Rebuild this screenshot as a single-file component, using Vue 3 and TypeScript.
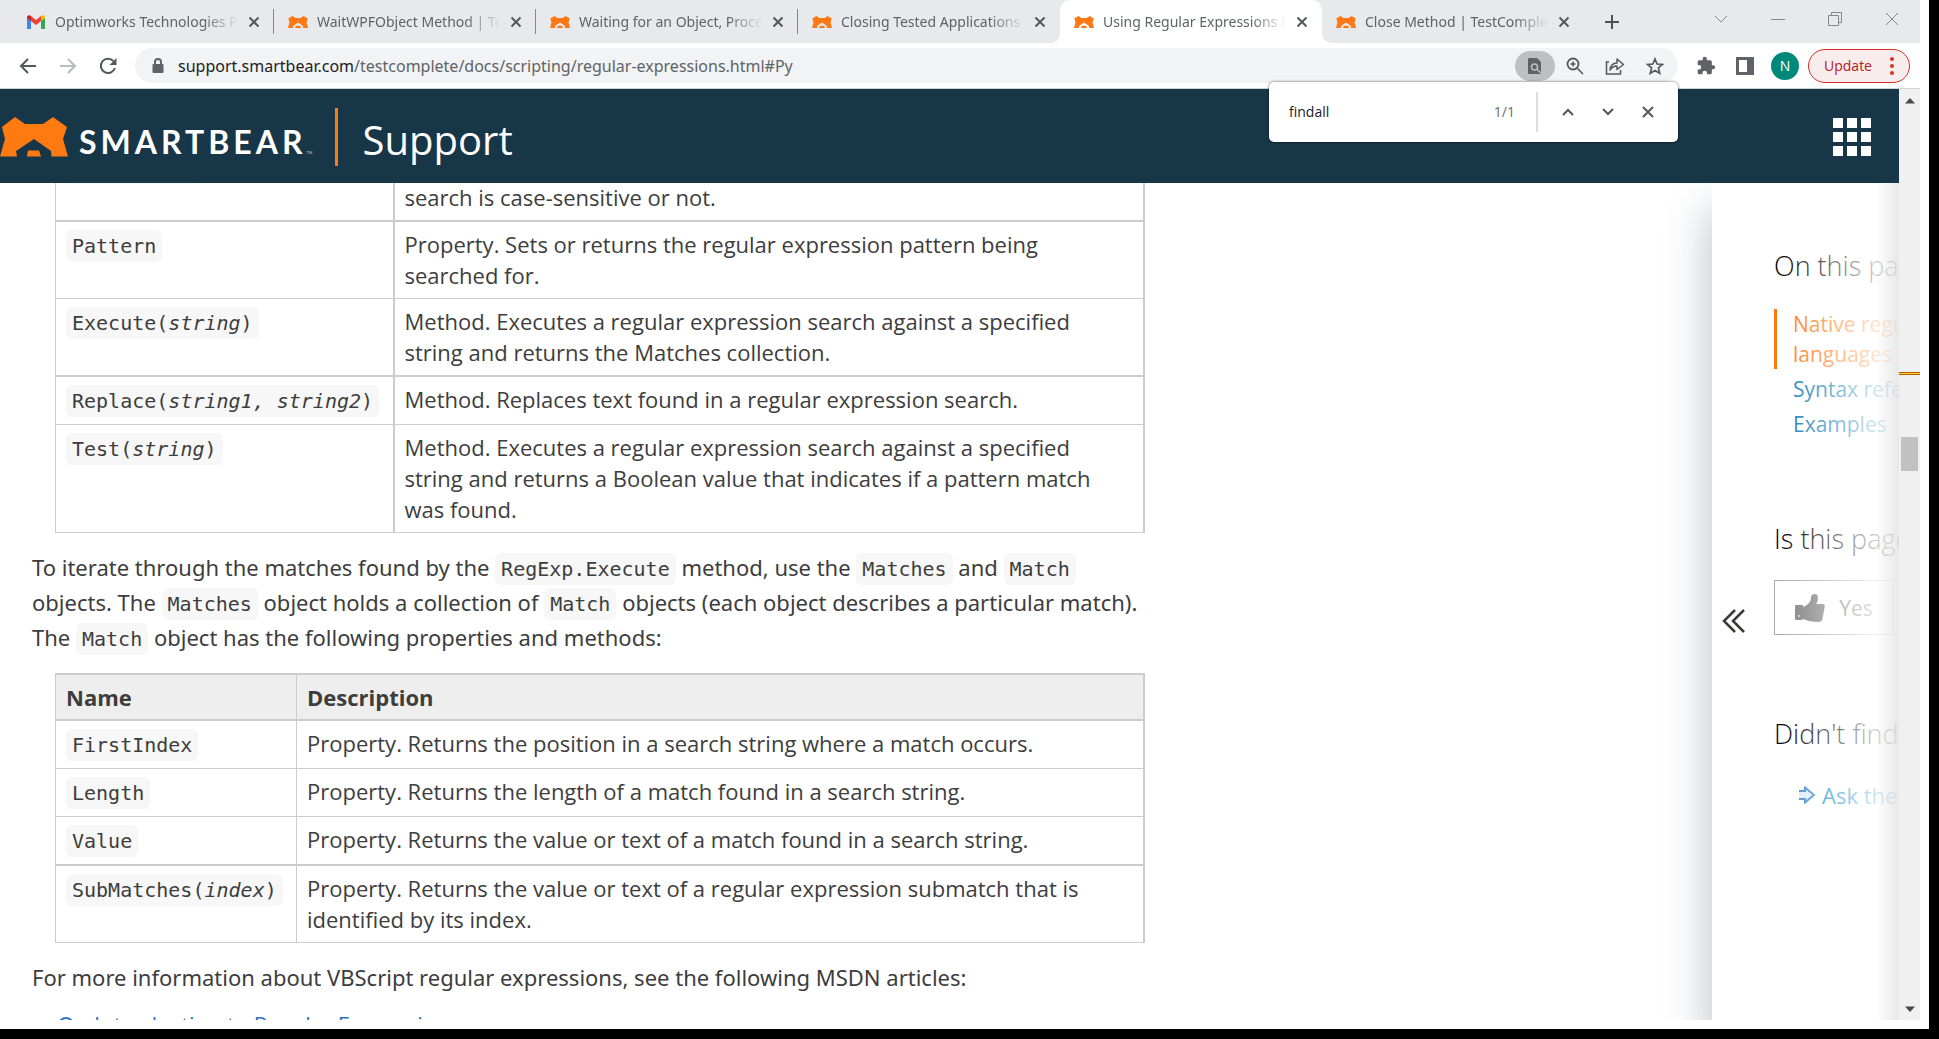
<script setup lang="ts">
import { ref } from 'vue'

interface Tab {
  title: string
  icon: 'gmail' | 'bear'
  active?: boolean
  divider?: boolean
}

interface Member {
  name: string
  args?: string
  text: string
  strong?: boolean
}

const tabs: Tab[] = [
  { title: 'Optimworks Technologies Pvt', icon: 'gmail', divider: true },
  { title: 'WaitWPFObject Method | TestComplete', icon: 'bear', divider: true },
  { title: 'Waiting for an Object, Process', icon: 'bear', divider: true },
  { title: 'Closing Tested Applications | Test', icon: 'bear' },
  { title: 'Using Regular Expressions in Scripts', icon: 'bear', active: true },
  { title: 'Close Method | TestComplete', icon: 'bear' },
]

const regExpMembers: Member[] = [
  { name: 'IgnoreCase', text: 'Property. A Boolean value that indicates whether the current pattern search is case-sensitive or not.', strong: true },
  { name: 'Pattern', text: 'Property. Sets or returns the regular expression pattern being searched for.' },
  { name: 'Execute', args: 'string', text: 'Method. Executes a regular expression search against a specified string and returns the Matches collection.', strong: true },
  { name: 'Replace', args: 'string1, string2', text: 'Method. Replaces text found in a regular expression search.' },
  { name: 'Test', args: 'string', text: 'Method. Executes a regular expression search against a specified string and returns a Boolean value that indicates if a pattern match was found.' },
]

const matchMembers: Member[] = [
  { name: 'FirstIndex', text: 'Property. Returns the position in a search string where a match occurs.' },
  { name: 'Length', text: 'Property. Returns the length of a match found in a search string.' },
  { name: 'Value', text: 'Property. Returns the value or text of a match found in a search string.', strong: true },
  { name: 'SubMatches', args: 'index', text: 'Property. Returns the value or text of a regular expression submatch that is identified by its index.' },
]

const query = ref('findall')
</script>

<template>
  <div class="frame">
    <div class="browser">
      <div class="tabstrip">
        <div v-for="tab in tabs" :key="tab.title" class="tab" :class="{ active: tab.active, divider: tab.divider }">
          <svg v-if="tab.icon === 'gmail'" class="favicon" viewBox="0 0 20 20">
            <path d="M1 17V5l4 3v9z" fill="#4285f4" />
            <path d="M15 17V8l4-3v12z" fill="#34a853" />
            <path d="M5 4l5 4 5-4v5l-5 4-5-4z" fill="#ea4335" />
            <path d="M1 5.500C1 3 3.500 2.600 5 4v5L1 6z" fill="#c5221f" />
            <path d="M19 5.500C19 3 16.500 2.600 15 4v5l4-3z" fill="#fbbc04" />
          </svg>
          <svg v-else class="favicon" viewBox="0 -8 68 56">
            <path d="M15 0 25 6H43L53 0 67 8 63 22 68 40H52L50 33 34 22 18 33 16 40H0L5 22 1 8zM27 33H41L44 40H24z" fill="#ff7814" />
          </svg>
          <span class="tab-title">{{ tab.title }}</span>
          <button class="tab-close" aria-label="Close tab">
            <svg viewBox="0 0 12 12"><path d="M1.500 1.500l9 9m0-9l-9 9" stroke="#55585c" stroke-width="2" /></svg>
          </button>
        </div>
        <button class="new-tab" aria-label="New tab">
          <svg viewBox="0 0 16 16"><path d="M8 1v14M1 8h14" stroke="#4d5055" stroke-width="2" /></svg>
        </button>
        <div class="window-buttons">
          <button aria-label="Search tabs"><svg viewBox="0 0 14 14"><path d="M1 4l6 6 6-6" /></svg></button>
          <button aria-label="Minimize"><svg viewBox="0 0 14 14"><path d="M0 7.500h14" /></svg></button>
          <button aria-label="Restore"><svg viewBox="0 0 14 14"><path d="M.5 3.500h10v10H.5zM3.500 3.500v-3h10v10h-3" /></svg></button>
          <button aria-label="Close window"><svg viewBox="0 0 14 14"><path d="M1 1l12 12M13 1L1 13" /></svg></button>
        </div>
      </div>

      <div class="toolbar">
        <div class="nav-buttons">
          <button aria-label="Back"><svg viewBox="0 0 18 18"><path d="M17 9H2m7-7L2 9l7 7" stroke="#55585c" stroke-width="2" fill="none" /></svg></button>
          <button aria-label="Forward"><svg viewBox="0 0 18 18"><path d="M1 9h15M9 2l7 7-7 7" stroke="#b9bbbe" stroke-width="2" fill="none" /></svg></button>
          <button aria-label="Reload"><svg viewBox="0 0 18 18"><path d="M14.500 4.200A7.200 7.200 0 1 0 15.900 11" stroke="#55585c" stroke-width="2" fill="none" /><path d="M17.500 1v7h-7z" fill="#55585c" /></svg></button>
        </div>
        <div class="omnibox">
          <svg class="lock" viewBox="0 0 12 16"><path d="M3 7V4a3 3 0 0 1 6 0v3" stroke="#5f6368" stroke-width="2" fill="none" /><rect x="0.500" y="6" width="11" height="9" rx="1" fill="#5f6368" /></svg>
          <div class="url"><b>support.smartbear.com</b>/testcomplete/docs/scripting/regular-expressions.html#Py</div>
          <button class="find-chip" aria-label="Find in page">
            <svg viewBox="0 0 16 18"><path d="M2 1h8l4 4v11a1 1 0 0 1-1 1H2a1 1 0 0 1-1-1V2a1 1 0 0 1 1-1z" fill="#5f6368" /><circle cx="7.500" cy="10" r="3" stroke="#c0c1c3" stroke-width="1.500" fill="none" /><path d="M9.500 12l4.500 4" stroke="#c0c1c3" stroke-width="1.500" /></svg>
          </button>
          <button aria-label="Zoom"><svg viewBox="0 0 18 18"><circle cx="7" cy="7" r="5.500" stroke="#55585c" stroke-width="1.800" fill="none" /><path d="M11 11l6 6M4.500 7h5M7 4.500v5" stroke="#55585c" stroke-width="1.600" /></svg></button>
          <button aria-label="Share"><svg class="share" viewBox="0 0 20 18"><path d="M4 5H1.500v12h14v-4" stroke="#55585c" stroke-width="1.500" fill="none" /><path d="M5 13c.5-4.500 3-7 7-7V2l6.500 5.500L12 12.500V9C9 9 7 10 5 13z" stroke="#55585c" stroke-width="1.500" fill="none" stroke-linejoin="round" /></svg></button>
          <button aria-label="Bookmark"><svg viewBox="0 0 18 18"><path d="M9 2l2.100 5 5.400.4-4.100 3.500 1.300 5.300L9 13.400l-4.700 2.800 1.300-5.300L1.500 7.400 6.900 7z" stroke="#55585c" stroke-width="1.700" fill="none" /></svg></button>
        </div>
        <button class="ext" aria-label="Extensions"><svg viewBox="0 0 24 24"><path d="M20.500 11H19V7a2 2 0 0 0-2-2h-4V3.500a2.500 2.500 0 0 0-5 0V5H4a2 2 0 0 0-2 2v3.800h1.500a2.700 2.700 0 0 1 0 5.400H2V20a2 2 0 0 0 2 2h3.800v-1.500a2.700 2.700 0 0 1 5.400 0V22H17a2 2 0 0 0 2-2v-4h1.500a2.500 2.500 0 0 0 0-5z" fill="#5f6368" /></svg></button>
        <button class="side" aria-label="Side panel"><svg viewBox="0 0 18 18"><rect x="1.500" y="1.500" width="15" height="15" fill="none" stroke="#5f6368" stroke-width="3" /><path d="M11 1h6v16h-6z" fill="#5f6368" /></svg></button>
        <button class="avatar">N</button>
        <button class="update">
          <span>Update</span>
          <svg viewBox="0 0 4 18"><circle cx="2" cy="2" r="2" /><circle cx="2" cy="9" r="2" /><circle cx="2" cy="16" r="2" /></svg>
        </button>
      </div>

      <div class="viewport">
        <div class="page">
          <header class="site-header">
            <svg class="bear" viewBox="0 0 68 40">
              <path d="M15 0 25 7H43L53 0 67 10 63 22 68 39.500H51.500L51 34 34 22 16 34 17 39.500H0L5 22 2 10z" fill="#ff7a11" />
              <path d="M28 33.500H39L41 39.500H27z" fill="#ff7a11" />
            </svg>
            <span class="wordmark">SMARTBEAR</span><span class="tm">™</span>
            <span class="rule"></span>
            <a class="support" href="#">Support</a>
            <button class="apps" aria-label="Menu"><i v-for="n in 9" :key="n"></i></button>
          </header>

          <div class="body">
            <main class="article">
              <table class="members first">
                <colgroup><col class="wide" /><col /></colgroup>
                <tbody>
                  <tr v-for="m in regExpMembers" :key="m.name" :class="{ strong: m.strong }">
                    <td><code>{{ m.name }}<template v-if="m.args">(<em>{{ m.args }}</em>)</template></code></td>
                    <td>{{ m.text }}</td>
                  </tr>
                </tbody>
              </table>

              <p>
                To iterate through the matches found by the <code>RegExp.Execute</code> method, use the <code>Matches</code> and <code>Match</code> objects. The <code>Matches</code> object holds a collection of <code>Match</code> objects (each object describes a particular match). The <code>Match</code> object has the following properties and methods:
              </p>

              <table class="members second">
                <colgroup><col class="narrow" /><col /></colgroup>
                <thead>
                  <tr><th>Name</th><th>Description</th></tr>
                </thead>
                <tbody>
                  <tr v-for="m in matchMembers" :key="m.name" :class="{ strong: m.strong }">
                    <td><code>{{ m.name }}<template v-if="m.args">(<em>{{ m.args }}</em>)</template></code></td>
                    <td>{{ m.text }}</td>
                  </tr>
                </tbody>
              </table>

              <p>For more information about VBScript regular expressions, see the following MSDN articles:</p>
              <a class="article-link" href="#">
                <svg viewBox="0 0 16 16"><circle cx="8" cy="8" r="7" fill="none" stroke="#2f74c0" stroke-width="2" /></svg>
                <span>Introduction to Regular Expressions</span>
              </a>
            </main>

            <aside class="panel">
              <button class="collapse" aria-label="Expand panel">
                <svg viewBox="0 0 24 24"><path d="M13 1L2 12l11 11M22 1L11 12l11 11" stroke="#3d3935" stroke-width="2.500" fill="none" /></svg>
              </button>
              <div class="panel-content">
                <h3>On this page</h3>
                <nav>
                  <a class="current" href="#">Native regular<br />languages</a>
                  <a href="#">Syntax reference</a>
                  <a href="#">Examples</a>
                </nav>
                <h3 class="helpful">Is this page helpful?</h3>
                <button class="yes">
                  <svg viewBox="0 0 30 28"><path d="M1 11h7v14l-1 1H1a1 1 0 0 1-1-1V12a1 1 0 0 1 1-1z" fill="#7d7d7d" /><path d="M8 13c5-2 8-5 8-10 0-2 2-3 4-3s3 2 3 4c0 3-1 5-2 6h7c2 0 2 2 1.500 4l-2 11c-.5 2-2 3-4 3-5 0-11-1-15.500-3z" fill="#7d7d7d" /><circle cx="4" cy="22" r="1" fill="#ddd" /></svg>
                  <span>Yes</span>
                </button>
                <h3 class="missing">Didn't find what you need?</h3>
                <a class="ask" href="#">
                  <svg viewBox="0 0 18 18"><path d="M1 5h6V1.500L16 9l-9 7.500V13H1" fill="#dcebf8" stroke="#3a86c8" stroke-width="2" /></svg>
                  <span>Ask the community</span>
                </a>
              </div>
            </aside>
          </div>
        </div>
        <div class="scrollbar">
          <svg class="arrow" viewBox="0 0 10 6"><path d="M0 5.500h10L5 0z" fill="#4a4a4a" /></svg>
          <span class="hit"></span>
          <span class="thumb"></span>
          <svg class="arrow down" viewBox="0 0 10 6"><path d="M0 .5h10L5 6z" fill="#4a4a4a" /></svg>
        </div>
      </div>

      <div class="findbar">
        <input v-model="query" type="text" aria-label="Find in page" />
        <span class="count">1/1</span>
        <button aria-label="Previous"><svg viewBox="0 0 12 12"><path d="M1 9l5-5 5 5" /></svg></button>
        <button aria-label="Next"><svg viewBox="0 0 12 12"><path d="M1 3l5 5 5-5" /></svg></button>
        <button aria-label="Close find bar"><svg viewBox="0 0 12 12"><path d="M1 1l10 10M11 1L1 11" /></svg></button>
      </div>
    </div>
  </div>
</template>

<style>
body {
  margin: 0;
  background: #fff;
}
</style>

<style scoped>
* {
  box-sizing: border-box;
}
button {
  display: flex;
  align-items: center;
  justify-content: center;
  padding: 0;
  border: 0;
  background: none;
  font: inherit;
  color: inherit;
}
svg {
  display: block;
  flex: none;
}
a {
  text-decoration: none;
}
.frame {
  height: 100vh;
  padding: 0 9px 9px 0;
  border-right: 10px solid #000;
  border-bottom: 10px solid #000;
  background: #fff;
  font-family: "Open Sans", "Noto Sans", sans-serif;
  color: #3d3d3d;
  overflow: hidden;
}
.browser {
  position: relative;
  height: 100%;
  display: flex;
  flex-direction: column;
}

/* tab strip */
.tabstrip {
  display: flex;
  flex: none;
  height: 43px;
  padding-left: 12px;
  background: #e7e9ec;
  color: #5f6368;
}
.tab {
  position: relative;
  display: flex;
  align-items: center;
  flex: 0 1 262px;
  min-width: 0;
  padding: 0 14px;
}
.tab.divider::before {
  content: "";
  position: absolute;
  right: 0;
  top: 9px;
  width: 1px;
  height: 25px;
  background: #85878b;
}
.tab.active {
  background: #fff;
  border-radius: 10px 10px 0 0;
}
.tab.active::before,
.tab.active::after {
  content: "";
  position: absolute;
  bottom: 0;
  width: 10px;
  height: 10px;
}
.tab.active::before {
  left: -10px;
  background: radial-gradient(circle at 0 0, transparent 10px, #fff 10px);
}
.tab.active::after {
  right: -10px;
  background: radial-gradient(circle at 100% 0, transparent 10px, #fff 10px);
}
.favicon {
  width: 20px;
  height: 20px;
}
.tab-title {
  flex: 1;
  min-width: 0;
  margin-left: 9px;
  overflow: hidden;
  white-space: nowrap;
  font-family: "Noto Sans", "Open Sans", sans-serif;
  font-size: 14px;
  line-height: 20px;
  mask-image: linear-gradient(to right, #000 calc(100% - 36px), transparent);
}
.tab-close {
  flex: none;
  width: 12px;
  height: 12px;
  margin-left: 9px;
}
.tab-close svg {
  width: 12px;
  height: 12px;
}
.new-tab {
  width: 55px;
}
.new-tab svg {
  width: 16px;
  height: 16px;
}
.window-buttons {
  display: flex;
  margin-left: auto;
  height: 37px;
}
.window-buttons button {
  width: 57px;
}
.window-buttons svg {
  width: 14px;
  height: 14px;
  stroke: #85878b;
  fill: none;
}

/* toolbar */
.toolbar {
  display: flex;
  align-items: center;
  flex: none;
  height: 46px;
  padding-right: 10px;
  border-bottom: 1px solid #d0d0d0;
  background: #fff;
}
.nav-buttons {
  display: flex;
  width: 135px;
  padding-left: 8px;
}
.nav-buttons button {
  width: 40px;
  height: 40px;
}
.nav-buttons svg {
  width: 18px;
  height: 18px;
}
.omnibox {
  display: flex;
  align-items: center;
  flex: 1;
  min-width: 0;
  height: 35px;
  padding: 0 3px 0 17px;
  border-radius: 18px;
  background: #f1f3f4;
}
.omnibox button {
  flex: none;
  width: 40px;
  height: 30px;
}
.omnibox button svg {
  width: 18px;
  height: 18px;
}
.omnibox button .share {
  width: 20px;
}
.lock {
  width: 12px;
  height: 16px;
}
.url {
  flex: 1;
  min-width: 0;
  margin-left: 14px;
  overflow: hidden;
  white-space: nowrap;
  font-family: "Noto Sans", "Open Sans", sans-serif;
  font-size: 16px;
  line-height: 26px;
  color: #5f6368;
}
.url b {
  font-weight: 400;
  color: #202124;
}
.find-chip {
  border-radius: 15px;
  background: #bdc0c3;
}
.ext {
  width: 55px;
}
.ext svg {
  width: 20px;
  height: 20px;
}
.side {
  width: 24px;
}
.side svg {
  width: 18px;
  height: 18px;
}
.avatar {
  width: 28px;
  height: 28px;
  margin: 0 9px 0 14px;
  border-radius: 50%;
  background: #00897b;
  color: #fff;
  font-size: 14px;
}
.update {
  gap: 18px;
  width: 102px;
  height: 34px;
  border: 1px solid #d93025;
  border-radius: 17px;
  background: #f9ecec;
  color: #b3201a;
  font-size: 14px;
}
.update svg {
  width: 4px;
  height: 18px;
  fill: #d93025;
}

/* page */
.viewport {
  display: flex;
  flex: 1;
  min-height: 0;
}
.page {
  display: flex;
  flex-direction: column;
  flex: 1;
  min-width: 0;
}
.site-header {
  display: flex;
  align-items: center;
  flex: none;
  height: 94px;
  padding: 2px 28px 0 0;
  background: #173647;
  color: #fff;
}
.bear {
  width: 68px;
  height: 40px;
}
.wordmark {
  margin-left: 11px;
  font-family: Lato, sans-serif;
  font-size: 32px;
  font-weight: 700;
  line-height: 40px;
  letter-spacing: 4px;
  padding-top: 10px;
}
.tm {
  align-self: flex-end;
  padding-bottom: 24px;
  font-size: 8px;
  line-height: 10px;
  color: #a9b4bb;
}
.rule {
  width: 3px;
  height: 58px;
  margin-left: 22px;
  background: #ff7a11;
}
.support {
  margin-left: 25px;
  padding-top: 6px;
  font-size: 40px;
  line-height: 50px;
  color: #fff;
}
.apps {
  display: grid;
  grid-template-columns: repeat(3, 10px);
  gap: 4px;
  margin-left: auto;
}
.apps i {
  height: 10px;
  background: #fff;
}
.body {
  display: flex;
  flex: 1;
  min-height: 0;
  overflow: hidden;
}
.article {
  flex: 1;
  min-width: 0;
  padding: 0 32px;
  font-size: 22px;
  line-height: 31px;
}
.article p {
  max-width: 1120px;
  margin: 17px 0 14px;
  font-family: "Noto Sans", "Open Sans", sans-serif;
  line-height: 35px;
}
code {
  display: inline-block;
  padding: 4px 6px;
  border-radius: 6px;
  background: #f7f7f7;
  font-family: "DejaVu Sans Mono", monospace;
  font-size: 20px;
  line-height: 24px;
}
.members {
  width: 1090px;
  max-width: 100%;
  margin-left: 23px;
  border-collapse: collapse;
  table-layout: fixed;
  border-right: 2px solid #ccc;
}
.members.first {
  margin-top: -40px;
}
.members.second {
  margin-top: 18px;
}
.wide {
  width: 338px;
}
.narrow {
  width: 241px;
}
.members td,
.members th {
  padding: 7px 16px 7px 10px;
  border: 1px solid #ccc;
  text-align: left;
  vertical-align: top;
}
.members td:first-child {
  padding-right: 10px;
  white-space: nowrap;
}
.members.first td:first-child {
  border-right-width: 2px;
}
.members .strong td {
  border-bottom-width: 2px;
}
.members th {
  padding-bottom: 6px;
  border-top-width: 2px;
  border-bottom-width: 2px;
  background: #eee;
  font-weight: 700;
}
.article-link {
  display: flex;
  align-items: center;
  gap: 20px;
  margin-left: 26px;
  color: #2a6fc0;
}
.article-link svg {
  width: 16px;
  height: 16px;
}

/* side panel */
.panel {
  position: relative;
  display: flex;
  flex: none;
  width: 187px;
  background: #fff;
  box-shadow: 0 30px 40px 4px rgba(23, 54, 71, 0.28);
}
.panel::after {
  content: "";
  position: absolute;
  inset: 0;
  pointer-events: none;
  background:
    linear-gradient(to right, rgba(0, 0, 0, 0) calc(100% - 24px), rgba(0, 0, 0, 0.09)),
    linear-gradient(to right, rgba(255, 255, 255, 0) 66px, rgba(255, 255, 255, 0.8) 164px, rgba(255, 255, 255, 0.92));
}
.collapse {
  flex: none;
  width: 44px;
  margin-right: 18px;
  padding-top: 38px;
}
.collapse svg {
  width: 24px;
  height: 24px;
}
.panel-content {
  flex: 1;
  min-width: 0;
  padding-top: 65px;
  overflow: hidden;
  white-space: nowrap;
}
.panel h3 {
  margin: 0;
  font-size: 27px;
  line-height: 36px;
  font-weight: 300;
  color: #000;
}
.panel nav {
  display: flex;
  flex-direction: column;
  gap: 5px;
  margin-top: 25px;
}
.panel nav a {
  padding-left: 16px;
  border-left: 3px solid transparent;
  font-size: 21px;
  line-height: 30px;
  color: #0b7cb5;
}
.panel nav a.current {
  border-left-color: #ff7a11;
  color: #ff7a11;
}
.panel .helpful {
  margin-top: 82px;
}
.yes {
  gap: 14px;
  width: 120px;
  height: 55px;
  margin-top: 23px;
  border: 1px solid #aaa;
  font-size: 21px;
  color: #777;
}
.yes svg {
  width: 30px;
  height: 28px;
}
.panel .missing {
  margin-top: 81px;
}
.ask {
  display: flex;
  align-items: center;
  gap: 6px;
  margin: 28px 0 0 24px;
  font-size: 22px;
  line-height: 30px;
  color: #0b8cc5;
}
.ask svg {
  width: 18px;
  height: 18px;
}

/* scrollbar */
.scrollbar {
  display: flex;
  flex-direction: column;
  align-items: center;
  flex: none;
  width: 21px;
  padding: 9px 0 8px;
  background: #f0f0f0;
}
.arrow {
  width: 10px;
  height: 6px;
}
.arrow.down {
  margin-top: auto;
}
.hit {
  align-self: stretch;
  height: 3px;
  margin-top: 268px;
  border-top: 1px solid #b85f00;
  border-bottom: 1px solid #b85f00;
  background: #ffcf33;
}
.thumb {
  width: 17px;
  height: 34px;
  margin-top: 62px;
  background: #c1c1c1;
}

/* find bar */
.findbar {
  position: absolute;
  top: 82px;
  right: 242px;
  display: flex;
  align-items: center;
  width: 409px;
  height: 60px;
  padding: 0 10px 0 20px;
  border-radius: 5px;
  background: #fff;
  box-shadow: 0 0 2px 1px rgba(0, 0, 0, 0.3);
}
.findbar input {
  flex: 1;
  min-width: 0;
  padding: 0;
  border: 0;
  outline: 0;
  background: none;
  font: 14px/20px "Open Sans", "Noto Sans", sans-serif;
  color: #202124;
}
.count {
  padding-right: 21px;
  border-right: 2px solid #dadce0;
  margin-right: 10px;
  font-size: 14px;
  line-height: 40px;
  color: #6b6e73;
}
.findbar button {
  width: 40px;
  height: 40px;
}
.findbar svg {
  width: 12px;
  height: 12px;
  stroke: #55585c;
  stroke-width: 2;
  fill: none;
}
</style>
